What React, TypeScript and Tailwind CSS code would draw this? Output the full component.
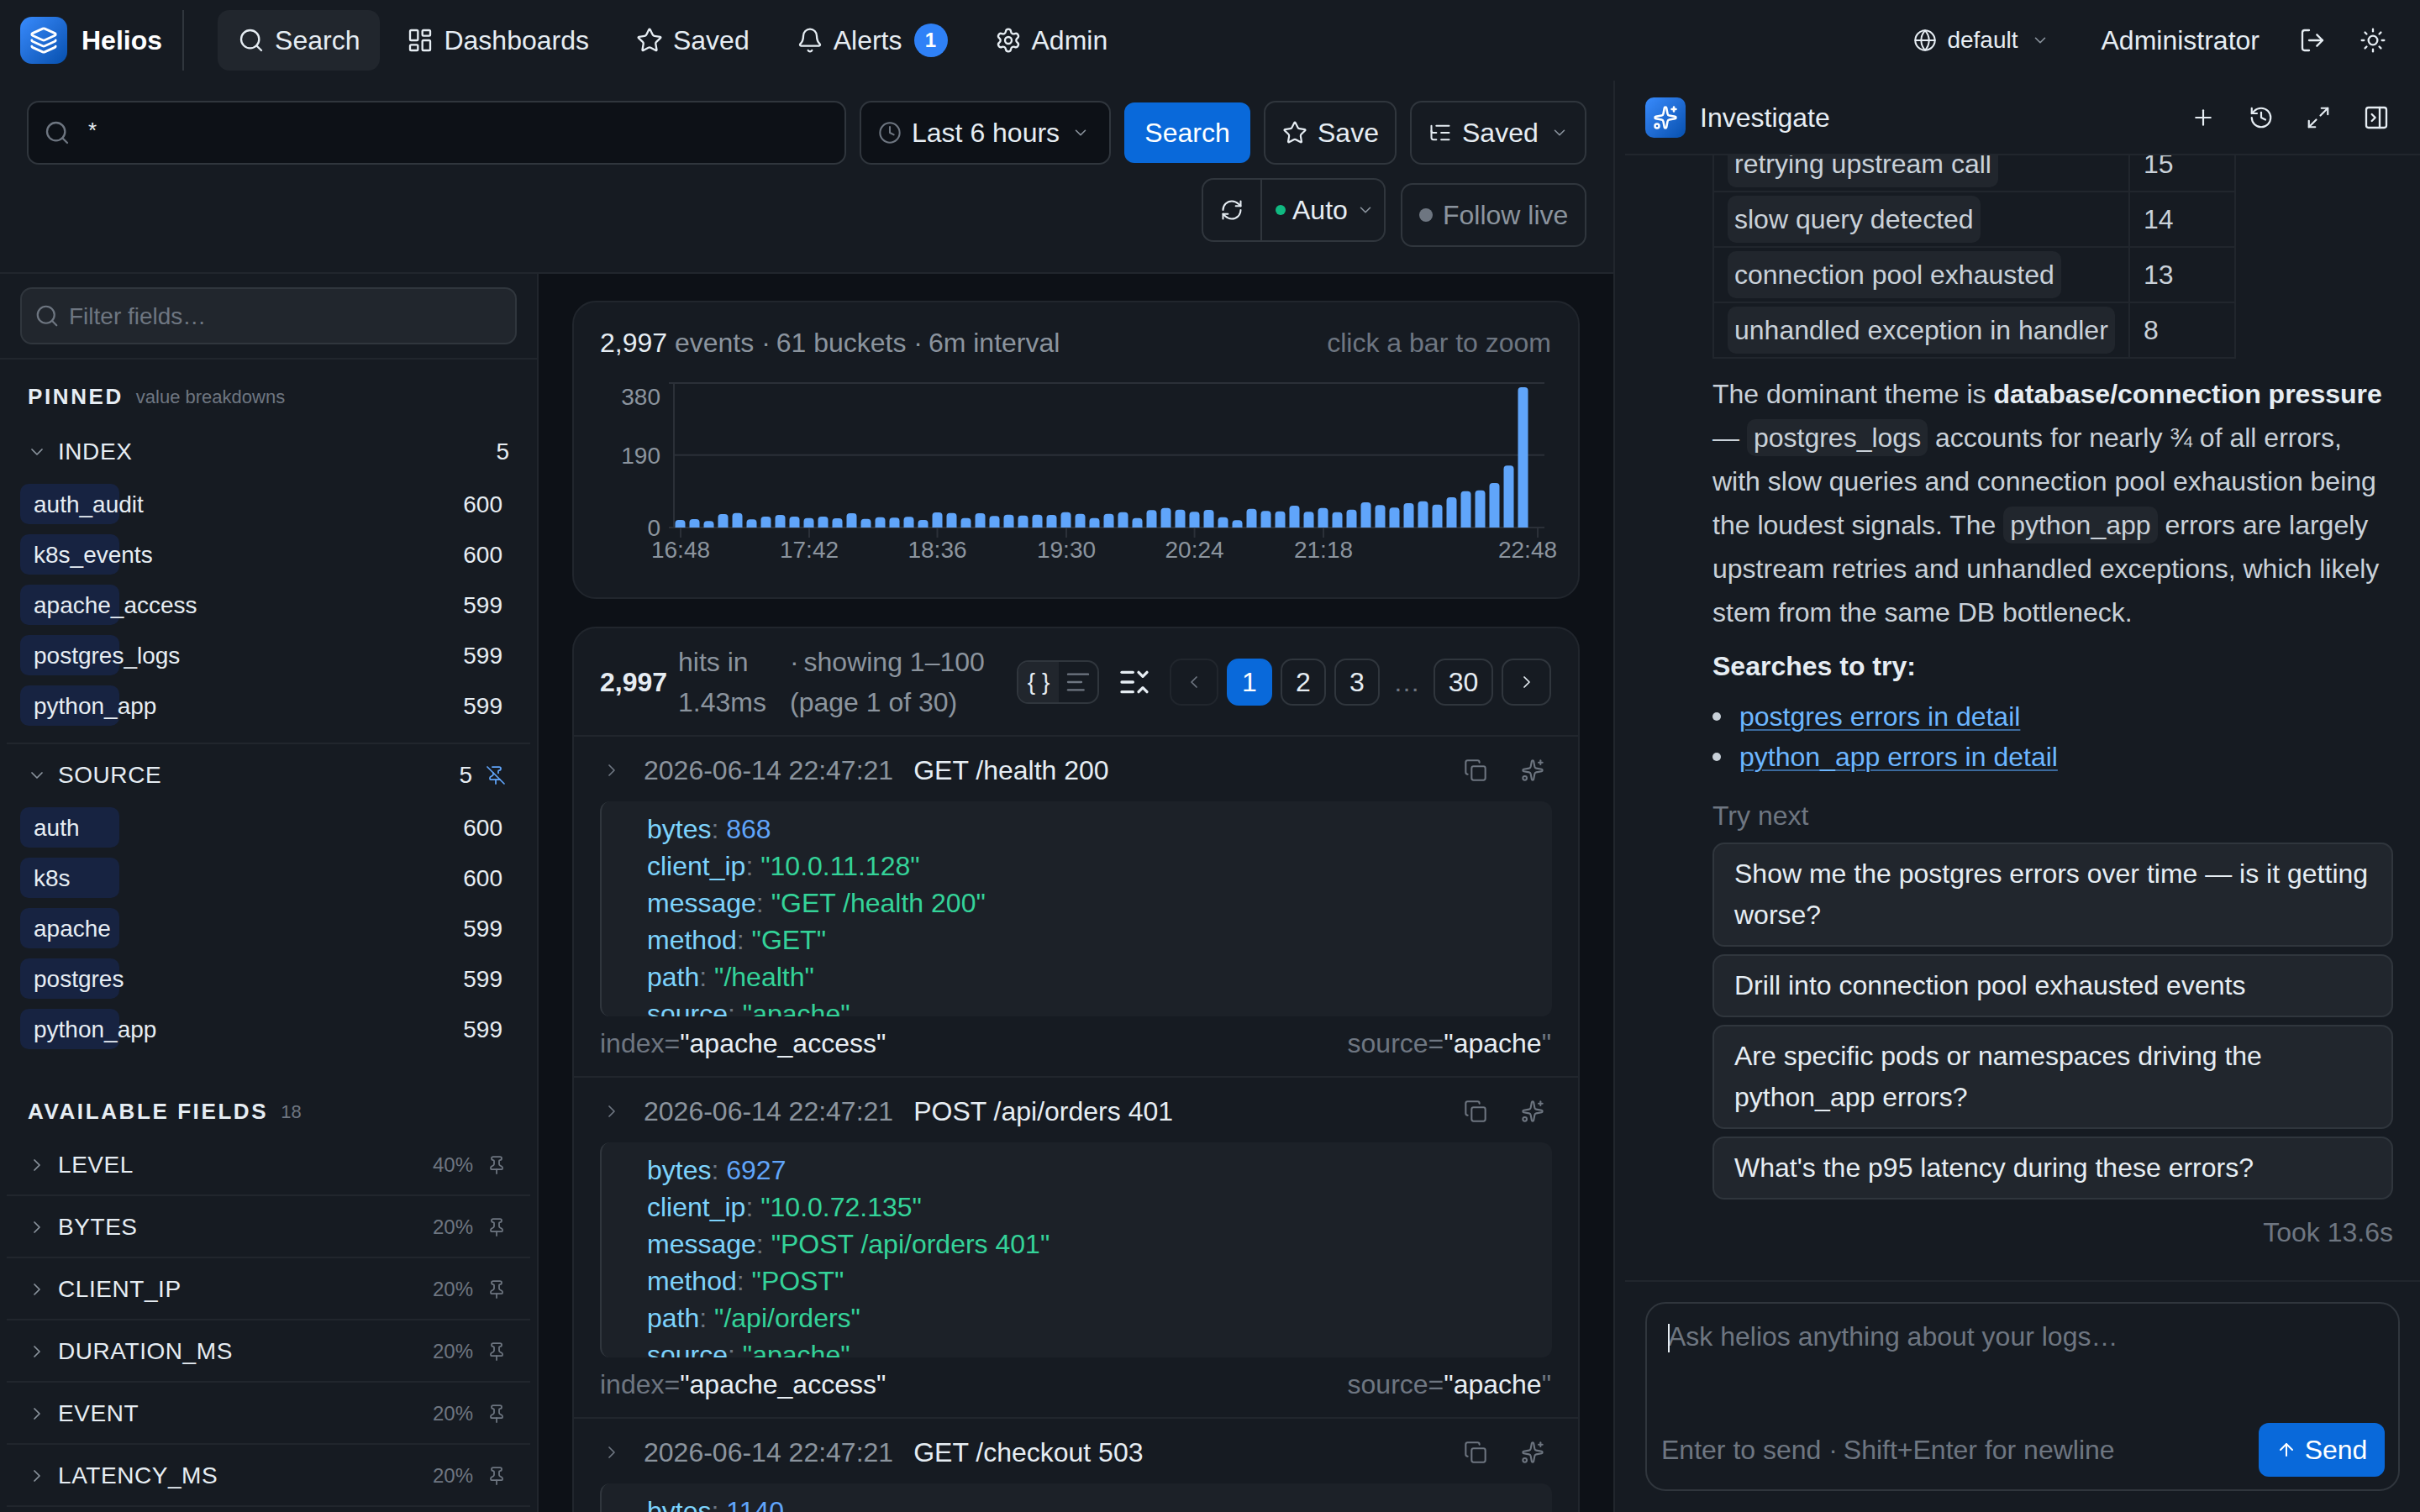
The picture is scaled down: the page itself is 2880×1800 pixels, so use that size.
import React from "react";
import {
  Search, LayoutDashboard, Star, Bell, Settings, Globe, ChevronDown, ChevronRight, ChevronLeft, LogOut, Sun, Clock,
  ListTree, RefreshCw, Layers, Sparkles, Plus, History, Maximize2, PanelRightClose, Pin, PinOff, AlignLeft,
  ListChevronsDownUp, Copy, ArrowUp,
} from "lucide-react";

const heights = [836,833,840,815,811,834,824,818,824,829,824,830,812,832,826,828,825,836,809,811,829,812,822,817,820,817,818,808,814,829,814,808,829,801,793,799,807,800,826,837,796,804,805,785,807,793,808,799,773,783,792,776,769,781,755,733,730,704,642,362];

function NavItem({ icon: I, label, active, children }: any) {
  return (
    <div className={`flex h-[72px] items-center gap-3 rounded-[14px] px-6 ${active ? "bg-[#21262d]" : ""}`}>
      <I size={32} strokeWidth={1.75} />
      <span>{label}</span>
      {children}
    </div>
  );
}

function Dot() {
  return <span className="-mr-[2px]">·</span>;
}

function Chart() {
  const ticks = [[810, "16:48"], [963, "17:42"], [1115.5, "18:36"], [1269, "19:30"], [1421.6, "20:24"], [1575, "21:18"]] as [number, string][];
  return (
    <svg width={1194} height={260} viewBox="683 430 1194 260" className="mt-1 block">
      <g stroke="#2b3038" strokeWidth={2}>
        <line x1={796} x2={1838} y1={456} y2={456} />
        <line x1={802} x2={1838} y1={541.7} y2={541.7} />
        <line x1={796} x2={1838} y1={628} y2={628} />
        <line x1={802} x2={802} y1={456} y2={628} />
        {ticks.map(([x]) => <line key={x} x1={x} x2={x} y1={628} y2={640} />)}
        <line x1={1830} x2={1830} y1={628} y2={640} />
      </g>
      {heights.map((t, i) => {
        const h = (863 - t) / 3;
        return <path key={i} fill="#60a5fa" d={`M${803.5 + i * 17} 628v${-(h - 4)}q0 -4 4 -4h4q4 0 4 4v${h - 4}z`} />;
      })}
      <g fill="#8b949e" fontSize={28} fontFamily="'Liberation Sans', sans-serif">
        <text x={786} y={482} textAnchor="end">380</text>
        <text x={786} y={552} textAnchor="end">190</text>
        <text x={786} y={638} textAnchor="end">0</text>
        {ticks.map(([x, l]) => <text key={x} x={x} y={664} textAnchor="middle">{l}</text>)}
        <text x={1818} y={664} textAnchor="middle">22:48</text>
      </g>
    </svg>
  );
}

function PageBtn({ children, active, dim, w }: any) {
  return (
    <div className={`flex h-[56px] shrink-0 items-center justify-center rounded-[14px] border-2 ${w} ${active ? "border-[#0969da] bg-[#0969da] text-white" : dim ? "border-[#21262d] text-[#6e7681]" : "border-[#30363d] text-[#e6edf3]"}`}>
      {children}
    </div>
  );
}

function Line({ k, v, num }: { k: string; v: string; num?: boolean }) {
  return (
    <div className="h-[44px] leading-[44px] whitespace-nowrap">
      <span className="text-[#7dd3fc]">{k}</span>
      <span className="text-[#6e7681]">: </span>
      <span className={num ? "text-[#60a5fa]" : "text-[#34d399]"}>{num ? v : `"${v}"`}</span>
    </div>
  );
}

function LogRow({ method, path, status, bytes, ip }: any) {
  const msg = `${method} ${path} ${status}`;
  return (
    <div className="h-[406px] border-b-2 border-[#21262d] px-[31px]">
      <div className="flex h-[77px] items-center pt-[2px]">
        <ChevronRight size={24} strokeWidth={1.75} className="ml-[2px] shrink-0 text-[#6e7681]" />
        <span className="ml-[26px] text-[#8b949e]">2026-06-14 22:47:21</span>
        <span className="ml-[24px] text-[#e6edf3]">{msg}</span>
        <Copy size={28} strokeWidth={1.75} className="ml-auto text-[#6e7681]" />
        <Sparkles size={28} strokeWidth={1.75} className="ml-[40px] mr-[9px] text-[#6e7681]" />
      </div>
      <div className="h-[256px] overflow-hidden rounded-[12px] border-l-2 border-[#30363d] bg-[#1c2128] pl-[54px] pt-[11px]">
        <Line k="bytes" v={bytes} num />
        <Line k="client_ip" v={ip} />
        <Line k="message" v={msg} />
        <Line k="method" v={method} />
        <Line k="path" v={path} />
        <Line k="source" v="apache" />
      </div>
      <div className="flex h-[64px] items-center justify-between pr-[1px]">
        <span><span className="text-[#6e7681]">index=</span><span className="text-[#e6edf3]">"apache_access"</span></span>
        <span><span className="text-[#6e7681]">source=</span><span className="text-[#e6edf3]">"apache</span><span className="text-[#6e7681]">"</span></span>
      </div>
    </div>
  );
}

function ValueRow({ label, count }: { label: string; count: string }) {
  return (
    <div className="relative flex h-[48px] items-center justify-between pl-4 pr-[15px] text-[28px] text-[#e6edf3]">
      <div className="absolute left-0 top-0 h-full w-[118px] rounded-[10px] bg-[#172341]" />
      <span className="relative top-[1px]">{label}</span>
      <span className="relative top-[1px]">{count}</span>
    </div>
  );
}

function FieldRow({ label, pct }: { label: string; pct: string }) {
  return (
    <div className="mx-2 flex h-[74px] shrink-0 items-center border-b-2 border-[#21262d] pl-[24px] pr-[28px] pt-[2px]">
      <ChevronRight size={24} strokeWidth={1.75} className="shrink-0 text-[#8b949e]" />
      <span className="ml-[13px] text-[28px] tracking-[0.02em] text-[#e6edf3]">{label}</span>
      <span className="ml-auto text-[24px] text-[#6e7681]">{pct}</span>
      <Pin size={24} strokeWidth={1.75} className="ml-[16px] text-[#6e7681]" />
    </div>
  );
}

function Suggestion({ children }: any) {
  return (
    <div className="rounded-[14px] border-2 border-[#30363d] bg-[#21262d] px-[24px] py-[11px] leading-[49px] text-[#e6edf3]">{children}</div>
  );
}

function Chip({ children }: any) {
  return <span className="rounded-[10px] bg-[#21262d] px-2 py-1">{children}</span>;
}

function TRow({ a, b }: { a: string; b: string }) {
  return (
    <div className="flex h-[66px] items-center border-b-2 border-[#21262d]">
      <div className="flex h-full w-[495px] items-center border-r-2 border-[#21262d] pl-[16px]">
        <Chip>{a}</Chip>
      </div>
      <div className="pl-[16px]">{b}</div>
    </div>
  );
}

export default function App() {
  return (
    <div className="flex h-[1800px] w-[2880px] flex-col overflow-hidden bg-[#161b22] text-[32px] text-[#e6edf3] [font-family:'Liberation_Sans',sans-serif]">
      {/* top navigation */}
      <div className="flex h-[96px] shrink-0 items-center pl-6 pr-[40px]">
        <div className="flex h-[56px] w-[56px] items-center justify-center rounded-[14px] bg-gradient-to-br from-[#388bfd] to-[#0550ae]">
          <Layers size={34} strokeWidth={2} className="text-white" />
        </div>
        <span className="ml-[17px] font-bold text-white">Helios</span>
        <div className="ml-[24px] mr-[40px] h-[72px] w-[2px] bg-[#30363d]" />
        <div className="flex items-center gap-2">
          <NavItem icon={Search} label="Search" active />
          <NavItem icon={LayoutDashboard} label="Dashboards" />
          <NavItem icon={Star} label="Saved" />
          <NavItem icon={Bell} label="Alerts">
            <span className="ml-[2px] flex h-[40px] w-[40px] items-center justify-center rounded-full bg-[#2f81f7] text-[24px] font-bold text-white">1</span>
          </NavItem>
          <NavItem icon={Settings} label="Admin" />
        </div>
        <div className="ml-auto flex items-center">
          <Globe size={28} strokeWidth={1.75} />
          <span className="ml-3 text-[28px]">default</span>
          <ChevronDown size={22} strokeWidth={1.75} className="ml-[15px] text-[#8b949e]" />
          <span className="ml-[62px]">Administrator</span>
          <LogOut size={32} strokeWidth={1.75} className="ml-[47px]" />
          <Sun size={32} strokeWidth={1.75} className="ml-[40px]" />
        </div>
      </div>

      <div className="flex min-h-0 flex-1">
        {/* main column */}
        <div className="flex w-[1922px] shrink-0 flex-col border-r-2 border-[#21262d]">
          <div className="flex h-[230px] shrink-0 flex-col gap-4 border-b-2 border-[#21262d] pl-8 pr-[32px] pt-6">
            <div className="flex h-[76px] items-center gap-4">
              <div className="flex h-full flex-1 items-start rounded-[14px] border-2 border-[#30363d] bg-[#0d1117] pl-[18px] pt-[20px]">
                <Search size={32} strokeWidth={1.75} className="text-[#6e7681]" />
                <span className="relative -top-[2px] ml-[21px] text-[26px] leading-[30px] text-[#e6edf3]">*</span>
              </div>
              <div className="flex h-full w-[299px] items-center rounded-[14px] border-2 border-[#30363d] bg-[#0d1117] pl-[20px]">
                <Clock size={28} strokeWidth={1.75} className="text-[#6e7681]" />
                <span className="ml-[12px]">Last 6 hours</span>
                <ChevronDown size={22} strokeWidth={1.75} className="ml-[14px] text-[#8b949e]" />
              </div>
              <div className="flex h-[72px] w-[150px] items-center justify-center rounded-[12px] bg-[#0969da] text-white">Search</div>
              <div className="flex h-full w-[158px] items-center rounded-[14px] border-2 border-[#30363d] pl-[20px]">
                <Star size={30} strokeWidth={1.75} />
                <span className="ml-[12px]">Save</span>
              </div>
              <div className="flex h-full w-[210px] items-center rounded-[14px] border-2 border-[#30363d] pl-[20px]">
                <ListTree size={28} strokeWidth={1.75} />
                <span className="ml-[12px]">Saved</span>
                <ChevronDown size={22} strokeWidth={1.75} className="ml-[14px] text-[#8b949e]" />
              </div>
            </div>
            <div className="flex items-start justify-end gap-[18px]">
              <div className="flex h-[76px] w-[219px] items-center rounded-[14px] border-2 border-[#30363d]">
                <div className="flex h-full w-[70px] items-center justify-center border-r-2 border-[#30363d]">
                  <RefreshCw size={28} strokeWidth={1.75} />
                </div>
                <span className="ml-[16px] h-[12px] w-[12px] rounded-full bg-[#10b981]" />
                <span className="ml-[8px]">Auto</span>
                <ChevronDown size={22} strokeWidth={1.75} className="ml-[10px] text-[#8b949e]" />
              </div>
              <div className="mt-[6px] flex h-[76px] w-[221px] items-center rounded-[14px] border-2 border-[#30363d] pl-[20px] text-[#8b949e]">
                <span className="h-[16px] w-[16px] rounded-full bg-[#6e7681]" />
                <span className="ml-[12px]">Follow live</span>
              </div>
            </div>
          </div>

          <div className="flex min-h-0 flex-1">
            {/* sidebar */}
            <div className="flex w-[641px] shrink-0 flex-col overflow-hidden border-r-2 border-[#21262d]">
              <div className="h-[102px] shrink-0 border-b-2 border-[#21262d] px-6 pt-4">
                <div className="flex h-[68px] items-center rounded-[14px] border-2 border-[#30363d] bg-[#21262d] pl-[15px] text-[28px] text-[#6e7681]">
                  <Search size={30} strokeWidth={1.75} />
                  <span className="relative top-[1px] ml-[11px]">Filter fields…</span>
                </div>
              </div>
              <div className="mt-[25px] flex h-[38px] shrink-0 items-center pl-[33px]">
                <span className="text-[26px] font-bold tracking-[0.1em] text-[#e6edf3]">PINNED</span>
                <span className="ml-[15px] text-[22px] text-[#6e7681]">value breakdowns</span>
              </div>
              <div className="mt-[17px] flex h-[60px] shrink-0 items-center pl-[32px] pr-[33px] text-[28px]">
                <ChevronDown size={24} strokeWidth={1.75} className="text-[#8b949e]" />
                <span className="ml-[13px] tracking-[0.02em]">INDEX</span>
                <span className="ml-auto">5</span>
              </div>
              <div className="mt-[8px] flex shrink-0 flex-col gap-3 pl-6 pr-[26px]">
                <ValueRow label="auth_audit" count="600" />
                <ValueRow label="k8s_events" count="600" />
                <ValueRow label="apache_access" count="599" />
                <ValueRow label="postgres_logs" count="599" />
                <ValueRow label="python_app" count="599" />
              </div>
              <div className="mx-2 mt-5 h-[2px] shrink-0 bg-[#21262d]" />
              <div className="mt-[7px] flex h-[60px] shrink-0 items-center pl-[32px] pr-[37px] text-[28px]">
                <ChevronDown size={24} strokeWidth={1.75} className="text-[#8b949e]" />
                <span className="ml-[13px] tracking-[0.02em]">SOURCE</span>
                <span className="ml-auto">5</span>
                <PinOff size={24} strokeWidth={1.75} className="ml-[16px] text-[#60a5fa]" />
              </div>
              <div className="mt-[8px] flex shrink-0 flex-col gap-3 pl-6 pr-[26px]">
                <ValueRow label="auth" count="600" />
                <ValueRow label="k8s" count="600" />
                <ValueRow label="apache" count="599" />
                <ValueRow label="postgres" count="599" />
                <ValueRow label="python_app" count="599" />
              </div>
              <div className="mt-[55px] flex h-[38px] shrink-0 items-center pl-[33px]">
                <span className="text-[26px] font-bold tracking-[0.1em] text-[#e6edf3]">AVAILABLE FIELDS</span>
                <span className="ml-[15px] text-[22px] text-[#6e7681]">18</span>
              </div>
              <div className="mt-[8px] flex flex-col">
                <FieldRow label="LEVEL" pct="40%" />
                <FieldRow label="BYTES" pct="20%" />
                <FieldRow label="CLIENT_IP" pct="20%" />
                <FieldRow label="DURATION_MS" pct="20%" />
                <FieldRow label="EVENT" pct="20%" />
                <FieldRow label="LATENCY_MS" pct="20%" />
              </div>
            </div>

            {/* results */}
            <div className="flex min-w-0 flex-1 flex-col gap-[33px] overflow-hidden bg-[#0d1117] px-10 pt-8">
              <div className="h-[355px] shrink-0 rounded-[28px] border-2 border-[#21262d] bg-[#161b22]">
                <div className="flex items-center justify-between pl-[31px] pr-[32px] pt-[30px] leading-[36px]">
                  <span className="text-[#8b949e]"><span className="text-[#e6edf3]">2,997</span> events <Dot /> 61 buckets <Dot /> 6m interval</span>
                  <span className="text-[#6e7681]">click a bar to zoom</span>
                </div>
                <Chart />
              </div>
              <div className="shrink-0 rounded-t-[28px] border-2 border-[#21262d] bg-[#161b22]">
                <div className="flex h-[129px] items-center border-b-2 border-[#21262d] pl-[31px] pr-[32px]">
                  <span className="w-[93px] shrink-0 font-bold">2,997</span>
                  <div className="w-[133px] shrink-0 leading-[48px] text-[#8b949e]"><div>hits in</div><div>1.43ms</div></div>
                  <div className="w-[270px] shrink-0 leading-[48px] text-[#8b949e]"><div><span className="-mr-[3px]">·</span> showing 1–100</div><div>(page 1 of 30)</div></div>
                  <div className="flex h-[52px] w-[98px] shrink-0 overflow-hidden rounded-[14px] border-2 border-[#30363d]">
                    <div className="flex w-[48px] items-center justify-center bg-[#21262d] text-[28px]">{"{ }"}</div>
                    <div className="flex flex-1 items-center justify-center text-[#6e7681]"><AlignLeft size={32} strokeWidth={1.75} /></div>
                  </div>
                  <ListChevronsDownUp size={40} strokeWidth={2} className="ml-[22px] shrink-0" />
                  <div className="ml-auto flex items-center gap-[10px]">
                    <PageBtn dim w="w-[58px]"><ChevronLeft size={24} strokeWidth={1.75} /></PageBtn>
                    <PageBtn active w="w-[54px]">1</PageBtn>
                    <PageBtn w="w-[54px]">2</PageBtn>
                    <PageBtn w="w-[54px]">3</PageBtn>
                    <span className="mx-[6px] text-[#6e7681]">…</span>
                    <PageBtn w="w-[71px]">30</PageBtn>
                    <PageBtn w="w-[59px]"><ChevronRight size={24} strokeWidth={1.75} /></PageBtn>
                  </div>
                </div>
                <LogRow method="GET" path="/health" status="200" bytes="868" ip="10.0.11.128" />
                <LogRow method="POST" path="/api/orders" status="401" bytes="6927" ip="10.0.72.135" />
                <LogRow method="GET" path="/checkout" status="503" bytes="1140" ip="10.0.45.12" />
              </div>
            </div>
          </div>
        </div>

        {/* investigate panel */}
        <div className="flex min-w-0 flex-1 flex-col pl-3">
          <div className="flex h-[89px] shrink-0 items-center border-b-2 border-[#21262d] pl-6 pr-[36px]">
            <div className="flex h-[48px] w-[48px] items-center justify-center rounded-[10px] bg-gradient-to-br from-[#388bfd] to-[#0550ae]">
              <Sparkles size={30} strokeWidth={2} className="text-white" />
            </div>
            <span className="ml-[17px]">Investigate</span>
            <div className="ml-auto flex items-center gap-[38px]">
              <Plus size={30} strokeWidth={1.75} className="mr-[1px]" />
              <History size={30} strokeWidth={1.75} />
              <Maximize2 size={30} strokeWidth={1.75} />
              <PanelRightClose size={32} strokeWidth={1.75} />
            </div>
          </div>
          <div className="min-h-0 flex-1 overflow-hidden pl-[104px] pr-[32px] text-[#c9d1d9]">
            <div className="-mt-[22px] w-[623px] border-x-2 border-[#21262d]">
              <TRow a="retrying upstream call" b="15" />
              <TRow a="slow query detected" b="14" />
              <TRow a="connection pool exhausted" b="13" />
              <TRow a="unhandled exception in handler" b="8" />
            </div>
            <p className="mt-[16px] leading-[52px]">
              The dominant theme is <b className="font-bold text-[#e6edf3]">database/connection pressure</b> — <Chip>postgres_logs</Chip> accounts for nearly ¾ of all errors, with slow queries and connection pool exhaustion being the loudest signals. The <Chip>python_app</Chip> errors are largely upstream retries and unhandled exceptions, which likely stem from the same DB bottleneck.
            </p>
            <p className="mt-[12px] font-bold leading-[52px] text-[#e6edf3]">Searches to try:</p>
            <ul className="mt-[10px] leading-[48px]">
              <li className="flex items-center gap-[22px]"><span className="h-[10px] w-[10px] rounded-full bg-[#c9d1d9]" /><span className="text-[#6cb6ff] underline decoration-[#3b6a9e] decoration-2 underline-offset-4">postgres errors in detail</span></li>
              <li className="flex items-center gap-[22px]"><span className="h-[10px] w-[10px] rounded-full bg-[#c9d1d9]" /><span className="text-[#6cb6ff] underline decoration-[#3b6a9e] decoration-2 underline-offset-4">python_app errors in detail</span></li>
            </ul>
            <p className="mt-[22px] leading-[48px] text-[#6e7681]">Try next</p>
            <div className="mt-[8px] flex flex-col gap-[9px]">
              <Suggestion>Show me the postgres errors over time — is it getting worse?</Suggestion>
              <Suggestion>Drill into connection pool exhausted events</Suggestion>
              <Suggestion>Are specific pods or namespaces driving the python_app errors?</Suggestion>
              <Suggestion>What's the p95 latency during these errors?</Suggestion>
            </div>
            <p className="mt-[19px] text-right leading-[40px] text-[#6e7681]">Took 13.6s</p>
          </div>
          <div className="h-[276px] shrink-0 border-t-2 border-[#21262d] pl-6 pr-6 pt-6">
            <div className="relative flex h-[225px] flex-col rounded-[24px] border-2 border-[#30363d] pb-[15px] pl-[17px] pr-[16px] pt-[20px] text-[#6e7681]">
              <div className="pl-[8px] leading-[38px]">
                <span className="absolute left-[25px] top-[24px] h-[34px] w-[2px] bg-[#e6edf3]" />
                Ask helios anything about your logs…
              </div>
              <div className="mt-auto flex items-center justify-between">
                <span>Enter to send <Dot /> Shift+Enter for newline</span>
                <div className="flex h-[64px] w-[150px] items-center justify-center gap-[10px] rounded-[12px] bg-[#0969da] text-white">
                  <ArrowUp size={24} strokeWidth={2} />
                  Send
                </div>
              </div>
            </div>
          </div>
        </div>
      </div>
    </div>
  );
}
